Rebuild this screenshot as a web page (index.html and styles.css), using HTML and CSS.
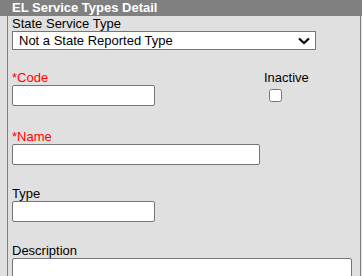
FILE: index.html
```html
<!DOCTYPE html>
<html lang="en">
  <head>
    <meta http-equiv="Content-Type" content="text/html;charset=UTF-8" />
    <meta name="viewport" content="width=device-width, initial-scale=1.0" />
    <title>EL Service Types Detail</title>
    <link rel="stylesheet" href="styles.css">
  </head>
  <body>
    <div class="detailHeader">EL Service Types Detail</div>

    <form class="detailPanel">
      <div class="field fieldState">
        <label for="stateType">State Service Type</label>
        <select id="stateType" class="stateSelect">
          <option>Not a State Reported Type</option>
        </select>
      </div>

      <div class="field fieldRow">
        <div class="codeCol">
          <label for="code" class="required">*Code</label>
          <input id="code" type="text" class="textShort" />
        </div>
        <div class="inactiveCol">
          <label for="inactive">Inactive</label>
          <input id="inactive" type="checkbox" />
        </div>
      </div>

      <div class="field">
        <label for="name" class="required">*Name</label>
        <input id="name" type="text" class="textLong" />
      </div>

      <div class="field">
        <label for="type">Type</label>
        <input id="type" type="text" class="textShort" />
      </div>

      <div class="field">
        <label for="description">Description</label>
        <textarea id="description" class="textArea"></textarea>
      </div>
    </form>
  </body>
</html>
```

FILE: styles.css
```css
/* Halaman dasar */
body {
  margin: 0;
  background-color: #e0e0e0;
  font-family: "Liberation Sans", Arial, sans-serif;
  font-size: 13px;
  color: #000;
  overflow: hidden;
}

/* Judul panel */
.detailHeader {
  height: 16px;
  line-height: 16px;
  padding-left: 12px;
  background-color: #808080;
  color: #fff;
  font-weight: bold;
}

/* Isi panel */
.detailPanel {
  margin: 0 0 0 7px;
  width: 354px;
  box-sizing: border-box;
  padding: 0 0 0 4px;
  background-color: #e0e0e0;
  border-left: 1px solid #808080;
  border-right: 1px solid #808080;
  min-height: 260px;
}

.field {
  margin-bottom: 21px;
}

.fieldState {
  margin-bottom: 20px;
}

.fieldRow {
  display: flex;
  margin-bottom: 23px;
}

.codeCol {
  width: 252px;
}

.inactiveCol {
  display: flex;
  flex-direction: column;
  align-items: flex-start;
}

label {
  display: block;
  line-height: 15px;
}

.required {
  color: #ff0000;
}

/* Kontrol form */
.stateSelect {
  display: block;
  width: 304px;
  height: 19px;
  margin: 0;
  padding: 0 0 0 6px;
  font-family: "Liberation Sans", Arial, sans-serif;
  font-size: 13px;
  color: #000;
  background-color: #fff;
  background-image: url("data:image/svg+xml,%3Csvg xmlns='http://www.w3.org/2000/svg' width='12' height='8' viewBox='0 0 12 8'%3E%3Cpath d='M1 1.5l5 4.5 5-4.5' fill='none' stroke='%23000' stroke-width='2.2'/%3E%3C/svg%3E");
  background-repeat: no-repeat;
  background-position: right 5px center;
  border: 1px solid #767676;
  border-radius: 0;
  appearance: none;
  -webkit-appearance: none;
}

input[type="text"],
.textArea {
  display: block;
  box-sizing: border-box;
  height: 21px;
  margin: 0;
  padding: 1px 2px;
  font-family: "Liberation Sans", Arial, sans-serif;
  font-size: 13px;
  background-color: #fff;
  border: 1px solid #767676;
  border-radius: 2px;
}

.textShort {
  width: 143px;
}

.textLong {
  width: 248px;
}

.textArea {
  width: 340px;
  height: 40px;
  resize: none;
}

input[type="checkbox"] {
  width: 13px;
  height: 13px;
  margin: 4px 0 0 5px;
}
```
